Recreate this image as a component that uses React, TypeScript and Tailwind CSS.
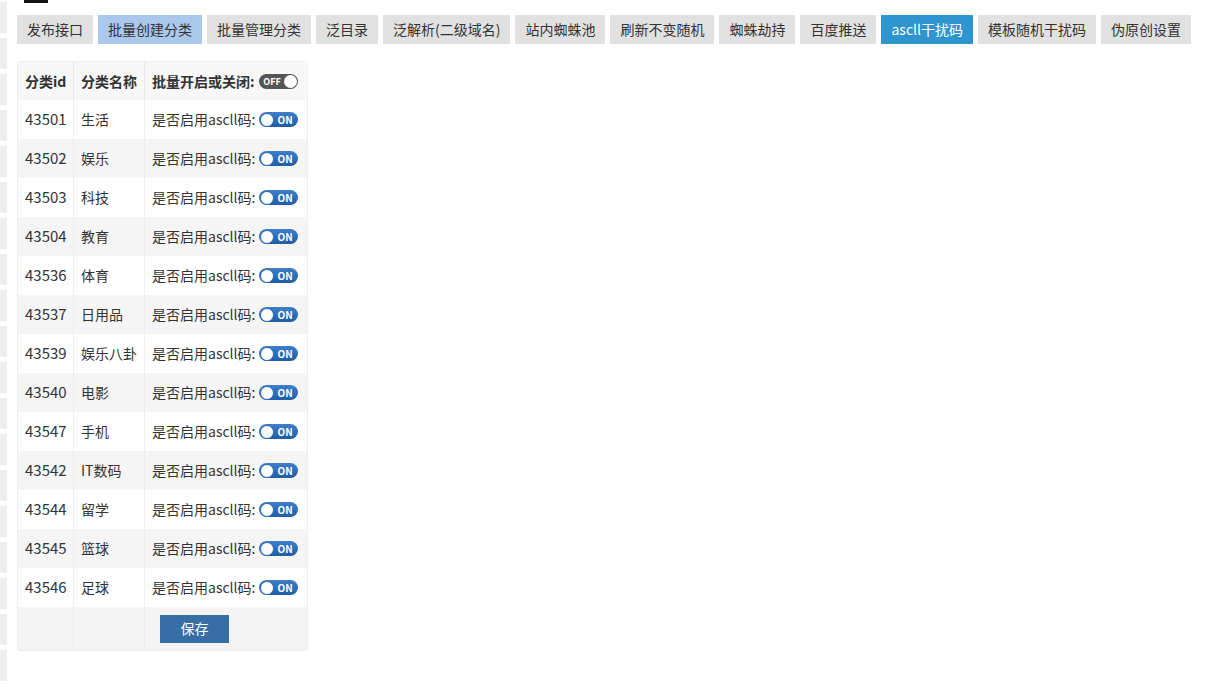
import React from "react";

const tabs = [
  { label: "发布接口", state: "" },
  { label: "批量创建分类", state: "light" },
  { label: "批量管理分类", state: "" },
  { label: "泛目录", state: "" },
  { label: "泛解析(二级域名)", state: "" },
  { label: "站内蜘蛛池", state: "" },
  { label: "刷新不变随机", state: "" },
  { label: "蜘蛛劫持", state: "" },
  { label: "百度推送", state: "" },
  { label: "ascll干扰码", state: "active" },
  { label: "模板随机干扰码", state: "" },
  { label: "伪原创设置", state: "" },
];

const rows = [
  ["43501", "生活"],
  ["43502", "娱乐"],
  ["43503", "科技"],
  ["43504", "教育"],
  ["43536", "体育"],
  ["43537", "日用品"],
  ["43539", "娱乐八卦"],
  ["43540", "电影"],
  ["43547", "手机"],
  ["43542", "IT数码"],
  ["43544", "留学"],
  ["43545", "篮球"],
  ["43546", "足球"],
];

function Toggle({ on }: { on: boolean }) {
  if (on) {
    return (
      <span className="inline-flex items-center w-[39px] h-[15px] rounded-full bg-gradient-to-b from-[#3d7fcb] to-[#1f5ea6] align-middle">
        <span className="w-[14px] h-[14px] rounded-full bg-white border border-[#2a6ab5] ml-[0.5px]" />
        <span className="flex-1 text-center text-white text-[10px] font-bold leading-none pr-[2px]">ON</span>
      </span>
    );
  }
  return (
    <span className="inline-flex items-center w-[39px] h-[15px] rounded-full bg-[#555] align-middle">
      <span className="flex-1 text-center text-white text-[9px] font-bold leading-none pl-[2px]">OFF</span>
      <span className="w-[13px] h-[13px] rounded-full bg-white mr-[1px]" />
    </span>
  );
}

export default function App() {
  return (
    <div className="relative w-[1209px] h-[689px] bg-white text-[#333] overflow-hidden" style={{ fontFamily: '"Microsoft YaHei", "Noto Sans CJK SC", "Noto Sans", sans-serif' }}>
      <div className="absolute left-0 top-0 w-[7px] h-full flex flex-col gap-[5px] pt-[2px]">
        {Array.from({ length: 19 }).map((_, i) => (
          <div key={i} className="h-[31px] bg-[#eeeeee]" />
        ))}
      </div>
      <div className="absolute left-[24px] top-0 w-[24px] h-[3px] bg-[#111]" />

      <div className="pl-[17px] pt-[15px]">
        <div className="flex gap-[5px]">
          {tabs.map((t) => (
            <div
              key={t.label}
              className={
                "h-[29px] px-[10px] flex items-center text-[14px] whitespace-nowrap " +
                (t.state === "active"
                  ? "bg-[#2e95cf] text-white"
                  : t.state === "light"
                  ? "bg-[#a9c8ec] text-[#333]"
                  : "bg-[#e1e1e1] text-[#333]")
              }
            >
              {t.label}
            </div>
          ))}
        </div>

        <div className="mt-[17px] w-[291px] border border-[#eeeeee] rounded-[3px] overflow-hidden text-[14px]">
          <div className="flex h-[38px] bg-[#f7f7f7] font-bold">
            <div className="w-[56px] pl-[7px] flex items-center border-r border-[#e8e8e8]">分类id</div>
            <div className="w-[71px] pl-[7px] flex items-center border-r border-[#e8e8e8]">分类名称</div>
            <div className="flex-1 pl-[7px] flex items-center gap-[4px]">
              批量开启或关闭: <Toggle on={false} />
            </div>
          </div>
          {rows.map((r, i) => (
            <div key={r[0]} className={"flex h-[39px] " + (i % 2 === 1 ? "bg-[#f5f5f5]" : "bg-white")}>
              <div className="w-[56px] pl-[7px] flex items-center border-r border-[#eeeeee] text-[15px]">{r[0]}</div>
              <div className="w-[71px] pl-[7px] flex items-center border-r border-[#eeeeee] whitespace-nowrap overflow-hidden">{r[1]}</div>
              <div className="flex-1 pl-[7px] flex items-center gap-[4px]">
                是否启用ascll码: <Toggle on={true} />
              </div>
            </div>
          ))}
          <div className="flex h-[43px] bg-[#f4f4f4]">
            <div className="w-[56px] border-r border-[#eaeaea]" />
            <div className="w-[71px] border-r border-[#eaeaea]" />
            <div className="flex-1 flex items-center pl-[15px]">
              <button className="w-[69px] h-[28px] bg-[#386ea6] text-white text-[14px] flex items-center justify-center">保存</button>
            </div>
          </div>
        </div>
      </div>
    </div>
  );
}
